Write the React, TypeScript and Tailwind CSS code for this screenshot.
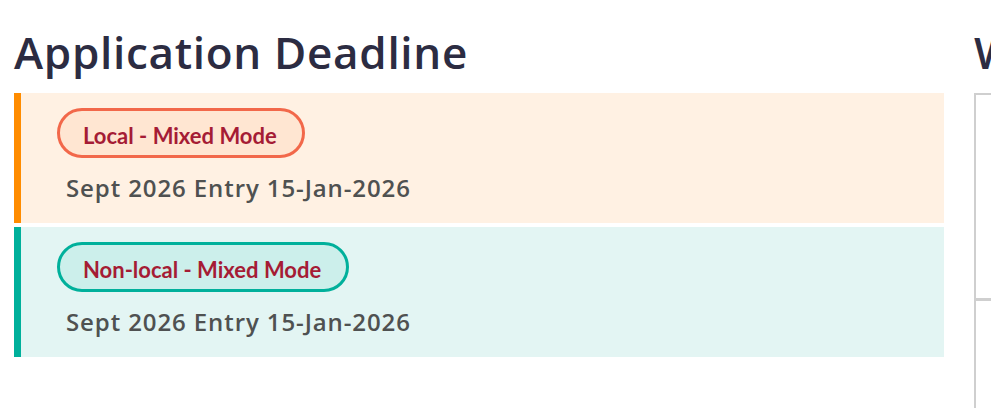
export default function App() {
  const entries = [
    {
      label: "Local - Mixed Mode",
      date: "Sept 2026 Entry 15-Jan-2026",
      card: "bg-[#fff1e3] border-[#ff8c00]",
      badge: "bg-[#ffe6d2] border-[#f2684a]",
    },
    {
      label: "Non-local - Mixed Mode",
      date: "Sept 2026 Entry 15-Jan-2026",
      card: "bg-[#e3f5f3] border-[#00b09b]",
      badge: "bg-[#ccefeb] border-[#00b09b]",
    },
  ];

  return (
    <div className="flex h-[408px] w-[991px] overflow-hidden bg-white pl-[14px] font-['Open_Sans',sans-serif]">
      <div className="w-[930px] shrink-0">
        <h2 className="mt-[24px] mb-[13px] text-[44px] leading-[56px] font-semibold tracking-[0.7px] text-[#2c2c42]">
          Application Deadline
        </h2>
        <div className="flex flex-col gap-[4px]">
          {entries.map((e) => (
            <div
              key={e.label}
              className={`h-[130px] border-l-[7px] pl-[36px] pt-[15px] ${e.card}`}
            >
              <span
                className={`inline-flex h-[50px] items-center rounded-full border-[3px] pl-[23px] pr-[25px] pt-[4px] font-['Lato',sans-serif] text-[22px] font-bold text-[#a51c35] ${e.badge}`}
              >
                {e.label}
              </span>
              <p className="mt-[14px] pl-[9px] text-[24px] leading-[32px] font-semibold tracking-[0.9px] text-[#4f5151]">
                {e.date}
              </p>
            </div>
          ))}
        </div>
      </div>
      <div className="ml-[30px] flex-1">
        <h2 className="mt-[24px] mb-[13px] text-[44px] leading-[56px] font-semibold text-[#2c2c42] whitespace-nowrap">
          Why
        </h2>
        <div className="h-[400px] border-l-2 border-t-2 border-[#cfcfcf]">
          <div className="h-[206px] border-b-[3px] border-[#cfcfcf]" />
        </div>
      </div>
    </div>
  );
}
